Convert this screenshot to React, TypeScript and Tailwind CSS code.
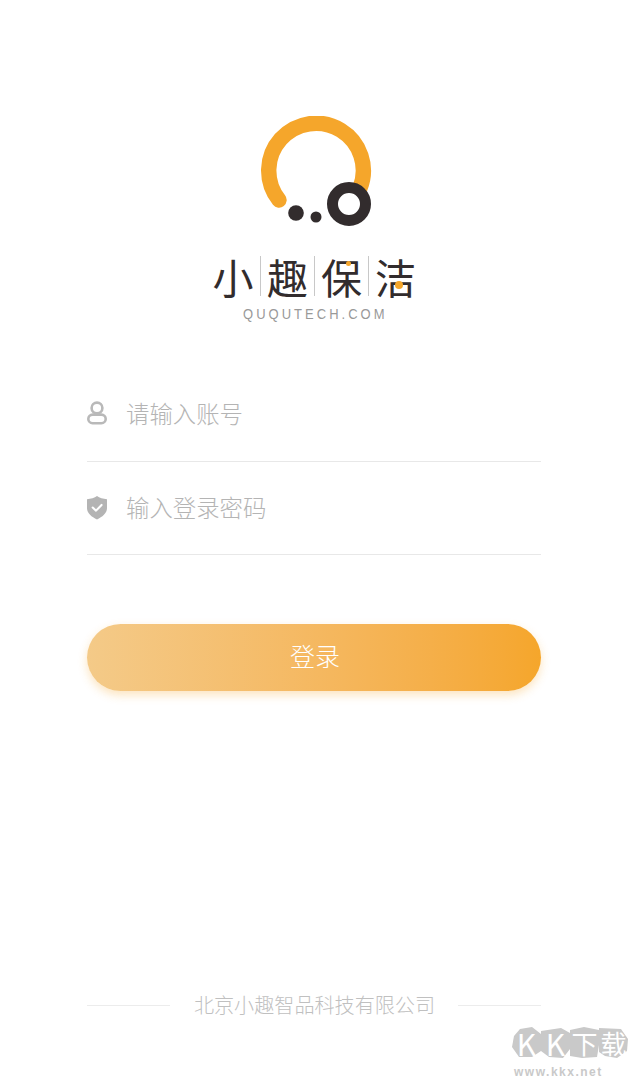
const cjk = "font-['Noto_Sans_CJK_SC','Noto_Sans',sans-serif]";

const Logo = () => (
  <svg width="112" height="112" viewBox="0 0 112 112" fill="none">
    <path d="M19 84 A47.3 47.3 0 1 1 100 72" stroke="#f5a62b" strokeWidth="15.4" strokeLinecap="round" />
    <circle cx="89" cy="88" r="16.5" stroke="#322c2d" strokeWidth="11" fill="#fff" />
    <circle cx="36" cy="97" r="7.8" fill="#322c2d" />
    <circle cx="56" cy="101" r="5.5" fill="#322c2d" />
  </svg>
);

const UserIcon = () => (
  <svg width="20" height="24" viewBox="0 0 20 24" fill="none" stroke="#b9b9b9" strokeWidth="2.6">
    <circle cx="10" cy="7" r="5.4" />
    <rect x="1.3" y="13.6" width="17.4" height="8.6" rx="4.3" />
  </svg>
);

const ShieldIcon = () => (
  <svg width="21" height="25" viewBox="0 0 21 25">
    <path d="M10.5 0.5 C13 2.5 17 3.6 21 3.8 V13 C21 18.5 16 22.5 10.5 25 C5 22.5 0 18.5 0 13 V3.8 C4 3.6 8 2.5 10.5 0.5 Z" fill="#b4b4b4" />
    <path d="M6 12.5 L9.5 15.8 L15.3 9.8" stroke="#fff" strokeWidth="2.2" fill="none" strokeLinecap="round" strokeLinejoin="round" />
  </svg>
);

const Field = ({ icon, placeholder, height }: { icon: React.ReactNode; placeholder: string; height: string }) => (
  <div className={`flex items-center gap-[20px] border-b border-[#e8e8e8] ${height}`}>
    <div className="-mt-[2px] flex w-[20px] justify-center">{icon}</div>
    <span className="-ml-[1px] text-[23.4px] font-light leading-none text-[#b4b4b4]">{placeholder}</span>
  </div>
);

const Mark = ({ points, label, size }: { points: string; label: string; size: string }) => (
  <div className="relative flex h-[31px] w-[29px] items-center justify-center">
    <svg className="absolute inset-0" width="29" height="31" viewBox="0 0 29 31">
      <polygon points={points} fill="#c9c9c9" />
    </svg>
    <span className={`relative font-normal leading-none text-white ${size}`}>{label}</span>
  </div>
);

export default function App() {
  return (
    <div className={`relative flex h-[1080px] w-[628px] flex-col overflow-hidden bg-white ${cjk}`}>
      <div className="flex flex-col items-center pt-[116px]">
        <div className="pl-[4px]">
          <Logo />
        </div>
        <div className="mt-[26px] flex h-[44px] items-center">
          {["小", "趣", "保", "洁"].map((c, i) => (
            <div key={c} className={`relative flex h-[40px] w-[54px] items-center justify-center ${i > 0 ? "border-l border-[#c8c8c8]" : ""}`}>
              <span className="text-[41px] font-normal leading-none text-[#322c2d]">{c}</span>
              {c === "保" && <div className="absolute left-[31px] top-[5px] h-[5px] w-[5px] rounded-full bg-[#f5a62b]" />}
              {c === "洁" && <div className="absolute left-[26px] top-[25px] h-[8px] w-[8px] rounded-full bg-[#f5a62b]" />}
            </div>
          ))}
        </div>
        <div className="mt-[8px] scale-x-[0.865] pl-[3px] font-['Liberation_Sans',sans-serif] text-[15px] leading-[16px] tracking-[3.5px] text-[#999999]">
          QUQUTECH.COM
        </div>
      </div>

      <div className="mt-[44px] flex flex-col px-[87px]">
        <Field icon={<UserIcon />} placeholder="请输入账号" height="h-[96px]" />
        <Field icon={<ShieldIcon />} placeholder="输入登录密码" height="h-[93px]" />
        <button className="mt-[69px] flex h-[67px] items-center justify-center rounded-full bg-gradient-to-r from-[#f4ca88] to-[#f5a62b] pb-[5px] pl-[2px] text-[25px] font-light leading-none text-white shadow-[0_4px_10px_rgba(245,166,43,0.3)]">
          登录
        </button>
      </div>

      <div className="mt-auto flex items-center gap-[23px] px-[87px] pb-[64px]">
        <div className="h-px flex-1 bg-[#ececec]" />
        <span className="pl-[1px] text-[20.1px] font-light leading-[22px] text-[#c0c0c0]">北京小趣智品科技有限公司</span>
        <div className="h-px flex-1 bg-[#ececec]" />
      </div>

      {/* watermark over the corner */}
      <div className="absolute bottom-[2px] right-[1px] flex w-[115px] flex-col items-start">
        <div className="flex">
          <Mark points="8,2 20,0 29,7 29,24 20,30 7,30 0,20 2,9" label="K" size="text-[30px]" />
          <Mark points="0,4 20,1 29,6 29,22 22,31 8,30 0,24" label="K" size="text-[30px]" />
          <Mark points="0,3 14,0 29,3 29,18 27,30 12,31 0,29" label="下" size="text-[26px]" />
          <Mark points="0,1 22,2 29,12 28,24 18,31 6,29 0,25" label="载" size="text-[26px]" />
        </div>
        <div className="mt-[8px] whitespace-nowrap pl-[2px] font-['Liberation_Sans',sans-serif] text-[12px] font-bold leading-[12px] tracking-[1.5px] text-[#c9c9c9]">
          www.kkx.net
        </div>
      </div>
    </div>
  );
}
